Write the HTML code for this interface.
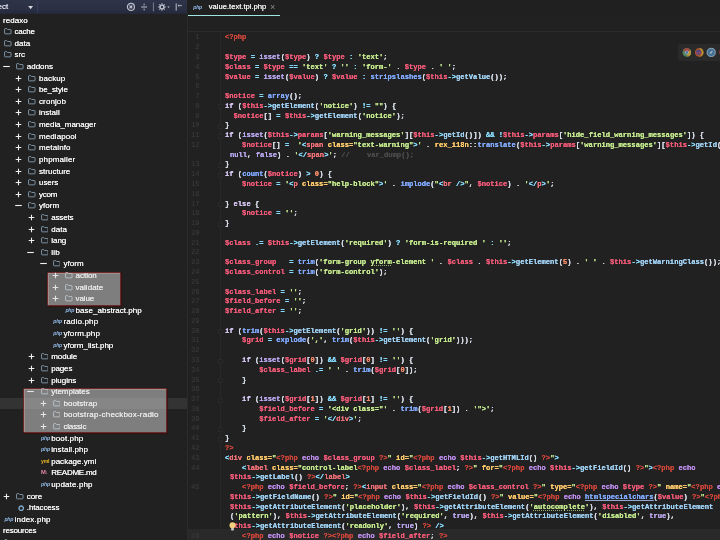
<!DOCTYPE html>
<html lang="en"><head><meta charset="utf-8"><title>value.text.tpl.php</title>
<style>
*{margin:0;padding:0;box-sizing:border-box}
html,body{width:720px;height:540px;overflow:hidden;background:#212121}
body{position:relative;font-family:"Liberation Sans", sans-serif;color:#e6e6e6;-webkit-font-smoothing:antialiased}
#side{position:absolute;left:0;top:0;width:187px;height:540px;background:#212121;overflow:hidden}
.tr,.cl,.ln,#tab,#sbar{will-change:transform}
#sbar{position:absolute;left:0;top:0;width:187.2px;height:13.6px;background:linear-gradient(#2e3449,#2a2f43 70%,#24283a)}
#sbar .t{position:absolute;left:-16.8px;top:0.2px;line-height:14px;font-size:8px;color:#d5d9e4;text-shadow:0 0 0 #d5d9e4}
#tabs{position:absolute;left:187px;top:0;width:533px;height:15.8px;background:#202020}
#tab{position:absolute;left:0;top:0;width:93px;height:15.8px}
#tab .u{position:absolute;left:0.4px;top:14.7px;width:92.4px;height:1.3px;background:#9fe6e2}
#tab .n{position:absolute;left:21.8px;top:0.4px;text-shadow:0 0 0 #f0f0f0;line-height:14px;font-size:7.6px;color:#f0f0f0;white-space:nowrap}
#tab .x{position:absolute;left:83px;top:0.9px;line-height:13.5px;font-size:9px;color:#8a8a8a}
#crumb{position:absolute;left:187px;top:15.8px;width:533px;height:16px;background:#212121;border-bottom:1px solid #2c2c2c}
#ed{position:absolute;left:187px;top:31.8px;width:533px;height:508.2px;background:#212121}
#vline{position:absolute;left:187px;top:14px;width:1px;height:526px;background:#2b2b2b}
#gline{position:absolute;left:219.8px;top:31.6px;width:1px;height:509px;background:#282828}
.ln{position:absolute;left:187px;width:12.6px;text-align:right;font-family:"Liberation Mono", monospace;font-size:7.14px;line-height:9.775px;height:9.775px;color:#3d3d3d}
.cl{position:absolute;white-space:pre;font-family:"Liberation Mono", monospace;font-size:7.14px;line-height:9.775px;height:9.775px;color:#d8dee9;font-weight:bold;text-shadow:0 0 0 currentColor}
.u1{color:#b9d0f5;text-decoration:underline;text-decoration-color:#93a8cc;text-decoration-thickness:0.6px;text-underline-offset:1.1px}
.u2{text-decoration:underline dotted;text-decoration-color:#8fae6a;text-decoration-thickness:0.8px;text-underline-offset:1.1px}
.m{color:#9fd0f2}.k1{color:#d4c6f1}.k3{color:#bb8cea}.fd{position:absolute;left:217.6px;width:5px;height:5px;border:1px solid #2a2a2a;background:#212121;border-radius:1px}
.v{color:#f25a78}.k{color:#b9a7ee}.f{color:#82aaff}.s{color:#c3e88d}.n{color:#f78c6c}
.o{color:#89ddff}.p{color:#d8dee9}.t{color:#f07178}.a{color:#ffcb6b}.h{color:#cc453a}.c{color:#4a4a4a}
.tr{position:absolute;left:0;width:187px;height:11.61px;line-height:11.61px;font-size:8.0px;white-space:nowrap}
.tr .nm{position:absolute;top:0;color:#f4f4f4;text-shadow:0 0 0 #f4f4f4}
.tr .tg{position:absolute;top:1.6px}
.tr .icw{position:absolute;top:0;height:11.61px;display:flex;align-items:center}
.ic.tx{font-size:5.2px;font-style:italic;font-weight:bold;letter-spacing:-0.2px;line-height:1;position:relative;top:-0.3px}
.ic.php{color:#8fb8e6}.ic.yml{color:#e6b422;font-style:normal}.ic.md{color:#e48aa4;font-style:normal;font-size:5.8px;letter-spacing:-0.6px}
.ib .ic path{stroke:#b9c1c9}
.ib .nm{color:#e6e6e6;text-shadow:0 0 0 #e6e6e6}
.ib .tg path{stroke:#e4e4e4}
#sel{position:absolute;left:0;top:397.6px;width:187px;height:11.6px;background:#333333}
.hb{position:absolute;background:rgba(200,200,200,0.56);border:1px solid #6a2a2c;border-radius:1.5px;box-shadow:inset 0.5px 0.5px 0 0.3px rgba(225,170,170,0.5),0.4px 0.6px 0.8px rgba(70,10,10,0.7)}
</style></head>
<body>
<div id="side">
<div id="sel"></div>
<div class="hb" style="left:46.6px;top:271.7px;width:74.6px;height:34.6px"></div>
<div class="hb" style="left:23.2px;top:388.1px;width:144px;height:45.4px"></div>
<div class="tr" style="top:14.60px"><span class="nm" id="n0" style="left:3.00px;letter-spacing:0.039px">redaxo</span></div>
<div class="tr" style="top:26.21px"><span class="icw" style="left:4.00px"><svg class="ic" viewBox="0 0 16 14" width="7.6" height="6.5" preserveAspectRatio="none" style="margin-top:-0.4px"><path d="M1.2 2.6 Q1.2 1.4 2.4 1.4 H6 L7.6 3.2 H13.6 Q14.8 3.2 14.8 4.4 V11.4 Q14.8 12.6 13.6 12.6 H2.4 Q1.2 12.6 1.2 11.4 Z" fill="none" stroke="#8097aa" stroke-width="2" stroke-linejoin="round"/></svg></span><span class="nm" id="n1" style="left:14.60px;letter-spacing:-0.250px">cache</span></div>
<div class="tr" style="top:37.82px"><span class="icw" style="left:4.00px"><svg class="ic" viewBox="0 0 16 14" width="7.6" height="6.5" preserveAspectRatio="none" style="margin-top:-0.4px"><path d="M1.2 2.6 Q1.2 1.4 2.4 1.4 H6 L7.6 3.2 H13.6 Q14.8 3.2 14.8 4.4 V11.4 Q14.8 12.6 13.6 12.6 H2.4 Q1.2 12.6 1.2 11.4 Z" fill="none" stroke="#8097aa" stroke-width="2" stroke-linejoin="round"/></svg></span><span class="nm" id="n2" style="left:14.60px;letter-spacing:0.032px">data</span></div>
<div class="tr" style="top:49.43px"><span class="icw" style="left:4.00px"><svg class="ic" viewBox="0 0 16 14" width="7.6" height="6.5" preserveAspectRatio="none" style="margin-top:-0.4px"><path d="M1.2 2.6 Q1.2 1.4 2.4 1.4 H6 L7.6 3.2 H13.6 Q14.8 3.2 14.8 4.4 V11.4 Q14.8 12.6 13.6 12.6 H2.4 Q1.2 12.6 1.2 11.4 Z" fill="none" stroke="#8097aa" stroke-width="2" stroke-linejoin="round"/></svg></span><span class="nm" id="n3" style="left:14.60px;letter-spacing:-0.089px">src</span></div>
<div class="tr" style="top:61.04px"><svg class="tg" style="left:2.90px" width="7" height="7" viewBox="0 0 7 7"><path d="M0.2 3.5H6.8" stroke="#f0f0f0" stroke-width="1.1" fill="none"/></svg><span class="icw" style="left:16.20px"><svg class="ic" viewBox="0 0 16 14" width="7.6" height="6.5" preserveAspectRatio="none" style="margin-top:-0.4px"><path d="M1.2 2.6 Q1.2 1.4 2.4 1.4 H6 L7.6 3.2 H13.6 Q14.8 3.2 14.8 4.4 V11.4 Q14.8 12.6 13.6 12.6 H2.4 Q1.2 12.6 1.2 11.4 Z" fill="none" stroke="#8097aa" stroke-width="2" stroke-linejoin="round"/></svg></span><span class="nm" id="n4" style="left:26.80px;letter-spacing:-0.008px">addons</span></div>
<div class="tr" style="top:72.65px"><svg class="tg" style="left:15.40px" width="7" height="7" viewBox="0 0 7 7"><path d="M0.7 3.5H6.3M3.5 0.7V6.3" stroke="#f0f0f0" stroke-width="1.1" fill="none"/></svg><span class="icw" style="left:28.40px"><svg class="ic" viewBox="0 0 16 14" width="7.6" height="6.5" preserveAspectRatio="none" style="margin-top:-0.4px"><path d="M1.2 2.6 Q1.2 1.4 2.4 1.4 H6 L7.6 3.2 H13.6 Q14.8 3.2 14.8 4.4 V11.4 Q14.8 12.6 13.6 12.6 H2.4 Q1.2 12.6 1.2 11.4 Z" fill="none" stroke="#8097aa" stroke-width="2" stroke-linejoin="round"/></svg></span><span class="nm" id="n5" style="left:39.00px;letter-spacing:0.084px">backup</span></div>
<div class="tr" style="top:84.26px"><svg class="tg" style="left:15.40px" width="7" height="7" viewBox="0 0 7 7"><path d="M0.7 3.5H6.3M3.5 0.7V6.3" stroke="#f0f0f0" stroke-width="1.1" fill="none"/></svg><span class="icw" style="left:28.40px"><svg class="ic" viewBox="0 0 16 14" width="7.6" height="6.5" preserveAspectRatio="none" style="margin-top:-0.4px"><path d="M1.2 2.6 Q1.2 1.4 2.4 1.4 H6 L7.6 3.2 H13.6 Q14.8 3.2 14.8 4.4 V11.4 Q14.8 12.6 13.6 12.6 H2.4 Q1.2 12.6 1.2 11.4 Z" fill="none" stroke="#8097aa" stroke-width="2" stroke-linejoin="round"/></svg></span><span class="nm" id="n6" style="left:39.00px;letter-spacing:-0.137px">be_style</span></div>
<div class="tr" style="top:95.87px"><svg class="tg" style="left:15.40px" width="7" height="7" viewBox="0 0 7 7"><path d="M0.7 3.5H6.3M3.5 0.7V6.3" stroke="#f0f0f0" stroke-width="1.1" fill="none"/></svg><span class="icw" style="left:28.40px"><svg class="ic" viewBox="0 0 16 14" width="7.6" height="6.5" preserveAspectRatio="none" style="margin-top:-0.4px"><path d="M1.2 2.6 Q1.2 1.4 2.4 1.4 H6 L7.6 3.2 H13.6 Q14.8 3.2 14.8 4.4 V11.4 Q14.8 12.6 13.6 12.6 H2.4 Q1.2 12.6 1.2 11.4 Z" fill="none" stroke="#8097aa" stroke-width="2" stroke-linejoin="round"/></svg></span><span class="nm" id="n7" style="left:39.00px;letter-spacing:0.107px">cronjob</span></div>
<div class="tr" style="top:107.48px"><svg class="tg" style="left:15.40px" width="7" height="7" viewBox="0 0 7 7"><path d="M0.7 3.5H6.3M3.5 0.7V6.3" stroke="#f0f0f0" stroke-width="1.1" fill="none"/></svg><span class="icw" style="left:28.40px"><svg class="ic" viewBox="0 0 16 14" width="7.6" height="6.5" preserveAspectRatio="none" style="margin-top:-0.4px"><path d="M1.2 2.6 Q1.2 1.4 2.4 1.4 H6 L7.6 3.2 H13.6 Q14.8 3.2 14.8 4.4 V11.4 Q14.8 12.6 13.6 12.6 H2.4 Q1.2 12.6 1.2 11.4 Z" fill="none" stroke="#8097aa" stroke-width="2" stroke-linejoin="round"/></svg></span><span class="nm" id="n8" style="left:39.00px;letter-spacing:0.035px">install</span></div>
<div class="tr" style="top:119.09px"><svg class="tg" style="left:15.40px" width="7" height="7" viewBox="0 0 7 7"><path d="M0.7 3.5H6.3M3.5 0.7V6.3" stroke="#f0f0f0" stroke-width="1.1" fill="none"/></svg><span class="icw" style="left:28.40px"><svg class="ic" viewBox="0 0 16 14" width="7.6" height="6.5" preserveAspectRatio="none" style="margin-top:-0.4px"><path d="M1.2 2.6 Q1.2 1.4 2.4 1.4 H6 L7.6 3.2 H13.6 Q14.8 3.2 14.8 4.4 V11.4 Q14.8 12.6 13.6 12.6 H2.4 Q1.2 12.6 1.2 11.4 Z" fill="none" stroke="#8097aa" stroke-width="2" stroke-linejoin="round"/></svg></span><span class="nm" id="n9" style="left:39.00px;letter-spacing:-0.062px">media_manager</span></div>
<div class="tr" style="top:130.70px"><svg class="tg" style="left:15.40px" width="7" height="7" viewBox="0 0 7 7"><path d="M0.7 3.5H6.3M3.5 0.7V6.3" stroke="#f0f0f0" stroke-width="1.1" fill="none"/></svg><span class="icw" style="left:28.40px"><svg class="ic" viewBox="0 0 16 14" width="7.6" height="6.5" preserveAspectRatio="none" style="margin-top:-0.4px"><path d="M1.2 2.6 Q1.2 1.4 2.4 1.4 H6 L7.6 3.2 H13.6 Q14.8 3.2 14.8 4.4 V11.4 Q14.8 12.6 13.6 12.6 H2.4 Q1.2 12.6 1.2 11.4 Z" fill="none" stroke="#8097aa" stroke-width="2" stroke-linejoin="round"/></svg></span><span class="nm" id="n10" style="left:39.00px;letter-spacing:0.086px">mediapool</span></div>
<div class="tr" style="top:142.31px"><svg class="tg" style="left:15.40px" width="7" height="7" viewBox="0 0 7 7"><path d="M0.7 3.5H6.3M3.5 0.7V6.3" stroke="#f0f0f0" stroke-width="1.1" fill="none"/></svg><span class="icw" style="left:28.40px"><svg class="ic" viewBox="0 0 16 14" width="7.6" height="6.5" preserveAspectRatio="none" style="margin-top:-0.4px"><path d="M1.2 2.6 Q1.2 1.4 2.4 1.4 H6 L7.6 3.2 H13.6 Q14.8 3.2 14.8 4.4 V11.4 Q14.8 12.6 13.6 12.6 H2.4 Q1.2 12.6 1.2 11.4 Z" fill="none" stroke="#8097aa" stroke-width="2" stroke-linejoin="round"/></svg></span><span class="nm" id="n11" style="left:39.00px;letter-spacing:0.127px">metainfo</span></div>
<div class="tr" style="top:153.92px"><svg class="tg" style="left:15.40px" width="7" height="7" viewBox="0 0 7 7"><path d="M0.7 3.5H6.3M3.5 0.7V6.3" stroke="#f0f0f0" stroke-width="1.1" fill="none"/></svg><span class="icw" style="left:28.40px"><svg class="ic" viewBox="0 0 16 14" width="7.6" height="6.5" preserveAspectRatio="none" style="margin-top:-0.4px"><path d="M1.2 2.6 Q1.2 1.4 2.4 1.4 H6 L7.6 3.2 H13.6 Q14.8 3.2 14.8 4.4 V11.4 Q14.8 12.6 13.6 12.6 H2.4 Q1.2 12.6 1.2 11.4 Z" fill="none" stroke="#8097aa" stroke-width="2" stroke-linejoin="round"/></svg></span><span class="nm" id="n12" style="left:39.00px;letter-spacing:0.129px">phpmailer</span></div>
<div class="tr" style="top:165.53px"><svg class="tg" style="left:15.40px" width="7" height="7" viewBox="0 0 7 7"><path d="M0.7 3.5H6.3M3.5 0.7V6.3" stroke="#f0f0f0" stroke-width="1.1" fill="none"/></svg><span class="icw" style="left:28.40px"><svg class="ic" viewBox="0 0 16 14" width="7.6" height="6.5" preserveAspectRatio="none" style="margin-top:-0.4px"><path d="M1.2 2.6 Q1.2 1.4 2.4 1.4 H6 L7.6 3.2 H13.6 Q14.8 3.2 14.8 4.4 V11.4 Q14.8 12.6 13.6 12.6 H2.4 Q1.2 12.6 1.2 11.4 Z" fill="none" stroke="#8097aa" stroke-width="2" stroke-linejoin="round"/></svg></span><span class="nm" id="n13" style="left:39.00px;letter-spacing:0.019px">structure</span></div>
<div class="tr" style="top:177.14px"><svg class="tg" style="left:15.40px" width="7" height="7" viewBox="0 0 7 7"><path d="M0.7 3.5H6.3M3.5 0.7V6.3" stroke="#f0f0f0" stroke-width="1.1" fill="none"/></svg><span class="icw" style="left:28.40px"><svg class="ic" viewBox="0 0 16 14" width="7.6" height="6.5" preserveAspectRatio="none" style="margin-top:-0.4px"><path d="M1.2 2.6 Q1.2 1.4 2.4 1.4 H6 L7.6 3.2 H13.6 Q14.8 3.2 14.8 4.4 V11.4 Q14.8 12.6 13.6 12.6 H2.4 Q1.2 12.6 1.2 11.4 Z" fill="none" stroke="#8097aa" stroke-width="2" stroke-linejoin="round"/></svg></span><span class="nm" id="n14" style="left:39.00px;letter-spacing:-0.053px">users</span></div>
<div class="tr" style="top:188.75px"><svg class="tg" style="left:15.40px" width="7" height="7" viewBox="0 0 7 7"><path d="M0.7 3.5H6.3M3.5 0.7V6.3" stroke="#f0f0f0" stroke-width="1.1" fill="none"/></svg><span class="icw" style="left:28.40px"><svg class="ic" viewBox="0 0 16 14" width="7.6" height="6.5" preserveAspectRatio="none" style="margin-top:-0.4px"><path d="M1.2 2.6 Q1.2 1.4 2.4 1.4 H6 L7.6 3.2 H13.6 Q14.8 3.2 14.8 4.4 V11.4 Q14.8 12.6 13.6 12.6 H2.4 Q1.2 12.6 1.2 11.4 Z" fill="none" stroke="#8097aa" stroke-width="2" stroke-linejoin="round"/></svg></span><span class="nm" id="n15" style="left:39.00px;letter-spacing:-0.206px">ycom</span></div>
<div class="tr" style="top:200.36px"><svg class="tg" style="left:15.10px" width="7" height="7" viewBox="0 0 7 7"><path d="M0.2 3.5H6.8" stroke="#f0f0f0" stroke-width="1.1" fill="none"/></svg><span class="icw" style="left:28.40px"><svg class="ic" viewBox="0 0 16 14" width="7.6" height="6.5" preserveAspectRatio="none" style="margin-top:-0.4px"><path d="M1.2 2.6 Q1.2 1.4 2.4 1.4 H6 L7.6 3.2 H13.6 Q14.8 3.2 14.8 4.4 V11.4 Q14.8 12.6 13.6 12.6 H2.4 Q1.2 12.6 1.2 11.4 Z" fill="none" stroke="#8097aa" stroke-width="2" stroke-linejoin="round"/></svg></span><span class="nm" id="n16" style="left:39.00px;letter-spacing:0.060px">yform</span></div>
<div class="tr" style="top:211.97px"><svg class="tg" style="left:27.60px" width="7" height="7" viewBox="0 0 7 7"><path d="M0.7 3.5H6.3M3.5 0.7V6.3" stroke="#f0f0f0" stroke-width="1.1" fill="none"/></svg><span class="icw" style="left:40.60px"><svg class="ic" viewBox="0 0 16 14" width="7.6" height="6.5" preserveAspectRatio="none" style="margin-top:-0.4px"><path d="M1.2 2.6 Q1.2 1.4 2.4 1.4 H6 L7.6 3.2 H13.6 Q14.8 3.2 14.8 4.4 V11.4 Q14.8 12.6 13.6 12.6 H2.4 Q1.2 12.6 1.2 11.4 Z" fill="none" stroke="#8097aa" stroke-width="2" stroke-linejoin="round"/></svg></span><span class="nm" id="n17" style="left:51.20px;letter-spacing:-0.169px">assets</span></div>
<div class="tr" style="top:223.58px"><svg class="tg" style="left:27.60px" width="7" height="7" viewBox="0 0 7 7"><path d="M0.7 3.5H6.3M3.5 0.7V6.3" stroke="#f0f0f0" stroke-width="1.1" fill="none"/></svg><span class="icw" style="left:40.60px"><svg class="ic" viewBox="0 0 16 14" width="7.6" height="6.5" preserveAspectRatio="none" style="margin-top:-0.4px"><path d="M1.2 2.6 Q1.2 1.4 2.4 1.4 H6 L7.6 3.2 H13.6 Q14.8 3.2 14.8 4.4 V11.4 Q14.8 12.6 13.6 12.6 H2.4 Q1.2 12.6 1.2 11.4 Z" fill="none" stroke="#8097aa" stroke-width="2" stroke-linejoin="round"/></svg></span><span class="nm" id="n18" style="left:51.20px;letter-spacing:0.059px">data</span></div>
<div class="tr" style="top:235.19px"><svg class="tg" style="left:27.60px" width="7" height="7" viewBox="0 0 7 7"><path d="M0.7 3.5H6.3M3.5 0.7V6.3" stroke="#f0f0f0" stroke-width="1.1" fill="none"/></svg><span class="icw" style="left:40.60px"><svg class="ic" viewBox="0 0 16 14" width="7.6" height="6.5" preserveAspectRatio="none" style="margin-top:-0.4px"><path d="M1.2 2.6 Q1.2 1.4 2.4 1.4 H6 L7.6 3.2 H13.6 Q14.8 3.2 14.8 4.4 V11.4 Q14.8 12.6 13.6 12.6 H2.4 Q1.2 12.6 1.2 11.4 Z" fill="none" stroke="#8097aa" stroke-width="2" stroke-linejoin="round"/></svg></span><span class="nm" id="n19" style="left:51.20px;letter-spacing:-0.003px">lang</span></div>
<div class="tr" style="top:246.80px"><svg class="tg" style="left:27.30px" width="7" height="7" viewBox="0 0 7 7"><path d="M0.2 3.5H6.8" stroke="#f0f0f0" stroke-width="1.1" fill="none"/></svg><span class="icw" style="left:40.60px"><svg class="ic" viewBox="0 0 16 14" width="7.6" height="6.5" preserveAspectRatio="none" style="margin-top:-0.4px"><path d="M1.2 2.6 Q1.2 1.4 2.4 1.4 H6 L7.6 3.2 H13.6 Q14.8 3.2 14.8 4.4 V11.4 Q14.8 12.6 13.6 12.6 H2.4 Q1.2 12.6 1.2 11.4 Z" fill="none" stroke="#8097aa" stroke-width="2" stroke-linejoin="round"/></svg></span><span class="nm" id="n20" style="left:51.20px;letter-spacing:0.266px">lib</span></div>
<div class="tr" style="top:258.41px"><svg class="tg" style="left:39.50px" width="7" height="7" viewBox="0 0 7 7"><path d="M0.2 3.5H6.8" stroke="#f0f0f0" stroke-width="1.1" fill="none"/></svg><span class="icw" style="left:52.80px"><svg class="ic" viewBox="0 0 16 14" width="7.6" height="6.5" preserveAspectRatio="none" style="margin-top:-0.4px"><path d="M1.2 2.6 Q1.2 1.4 2.4 1.4 H6 L7.6 3.2 H13.6 Q14.8 3.2 14.8 4.4 V11.4 Q14.8 12.6 13.6 12.6 H2.4 Q1.2 12.6 1.2 11.4 Z" fill="none" stroke="#8097aa" stroke-width="2" stroke-linejoin="round"/></svg></span><span class="nm" id="n21" style="left:63.40px;letter-spacing:0.062px">yform</span></div>
<div class="tr ib" style="top:270.02px"><svg class="tg" style="left:52.00px" width="7" height="7" viewBox="0 0 7 7"><path d="M0.7 3.5H6.3M3.5 0.7V6.3" stroke="#f0f0f0" stroke-width="1.1" fill="none"/></svg><span class="icw" style="left:65.00px"><svg class="ic" viewBox="0 0 16 14" width="7.6" height="6.5" preserveAspectRatio="none" style="margin-top:-0.4px"><path d="M1.2 2.6 Q1.2 1.4 2.4 1.4 H6 L7.6 3.2 H13.6 Q14.8 3.2 14.8 4.4 V11.4 Q14.8 12.6 13.6 12.6 H2.4 Q1.2 12.6 1.2 11.4 Z" fill="none" stroke="#8097aa" stroke-width="2" stroke-linejoin="round"/></svg></span><span class="nm" id="n22" style="left:75.60px;letter-spacing:-0.042px">action</span></div>
<div class="tr ib" style="top:281.63px"><svg class="tg" style="left:52.00px" width="7" height="7" viewBox="0 0 7 7"><path d="M0.7 3.5H6.3M3.5 0.7V6.3" stroke="#f0f0f0" stroke-width="1.1" fill="none"/></svg><span class="icw" style="left:65.00px"><svg class="ic" viewBox="0 0 16 14" width="7.6" height="6.5" preserveAspectRatio="none" style="margin-top:-0.4px"><path d="M1.2 2.6 Q1.2 1.4 2.4 1.4 H6 L7.6 3.2 H13.6 Q14.8 3.2 14.8 4.4 V11.4 Q14.8 12.6 13.6 12.6 H2.4 Q1.2 12.6 1.2 11.4 Z" fill="none" stroke="#8097aa" stroke-width="2" stroke-linejoin="round"/></svg></span><span class="nm" id="n23" style="left:75.60px;letter-spacing:0.016px">validate</span></div>
<div class="tr ib" style="top:293.24px"><svg class="tg" style="left:52.00px" width="7" height="7" viewBox="0 0 7 7"><path d="M0.7 3.5H6.3M3.5 0.7V6.3" stroke="#f0f0f0" stroke-width="1.1" fill="none"/></svg><span class="icw" style="left:65.00px"><svg class="ic" viewBox="0 0 16 14" width="7.6" height="6.5" preserveAspectRatio="none" style="margin-top:-0.4px"><path d="M1.2 2.6 Q1.2 1.4 2.4 1.4 H6 L7.6 3.2 H13.6 Q14.8 3.2 14.8 4.4 V11.4 Q14.8 12.6 13.6 12.6 H2.4 Q1.2 12.6 1.2 11.4 Z" fill="none" stroke="#8097aa" stroke-width="2" stroke-linejoin="round"/></svg></span><span class="nm" id="n24" style="left:75.60px;letter-spacing:-0.144px">value</span></div>
<div class="tr" style="top:304.85px"><span class="icw" style="left:65.40px"><span class="ic tx php">php</span></span><span class="nm" id="n25" style="left:75.60px;letter-spacing:0.016px">base_abstract.php</span></div>
<div class="tr" style="top:316.46px"><span class="icw" style="left:53.20px"><span class="ic tx php">php</span></span><span class="nm" id="n26" style="left:63.40px;letter-spacing:0.172px">radio.php</span></div>
<div class="tr" style="top:328.07px"><span class="icw" style="left:53.20px"><span class="ic tx php">php</span></span><span class="nm" id="n27" style="left:63.40px;letter-spacing:0.115px">yform.php</span></div>
<div class="tr" style="top:339.68px"><span class="icw" style="left:53.20px"><span class="ic tx php">php</span></span><span class="nm" id="n28" style="left:63.40px;letter-spacing:0.008px">yform_list.php</span></div>
<div class="tr" style="top:351.29px"><svg class="tg" style="left:27.60px" width="7" height="7" viewBox="0 0 7 7"><path d="M0.7 3.5H6.3M3.5 0.7V6.3" stroke="#f0f0f0" stroke-width="1.1" fill="none"/></svg><span class="icw" style="left:40.60px"><svg class="ic" viewBox="0 0 16 14" width="7.6" height="6.5" preserveAspectRatio="none" style="margin-top:-0.4px"><path d="M1.2 2.6 Q1.2 1.4 2.4 1.4 H6 L7.6 3.2 H13.6 Q14.8 3.2 14.8 4.4 V11.4 Q14.8 12.6 13.6 12.6 H2.4 Q1.2 12.6 1.2 11.4 Z" fill="none" stroke="#8097aa" stroke-width="2" stroke-linejoin="round"/></svg></span><span class="nm" id="n29" style="left:51.20px;letter-spacing:-0.023px">module</span></div>
<div class="tr" style="top:362.90px"><svg class="tg" style="left:27.60px" width="7" height="7" viewBox="0 0 7 7"><path d="M0.7 3.5H6.3M3.5 0.7V6.3" stroke="#f0f0f0" stroke-width="1.1" fill="none"/></svg><span class="icw" style="left:40.60px"><svg class="ic" viewBox="0 0 16 14" width="7.6" height="6.5" preserveAspectRatio="none" style="margin-top:-0.4px"><path d="M1.2 2.6 Q1.2 1.4 2.4 1.4 H6 L7.6 3.2 H13.6 Q14.8 3.2 14.8 4.4 V11.4 Q14.8 12.6 13.6 12.6 H2.4 Q1.2 12.6 1.2 11.4 Z" fill="none" stroke="#8097aa" stroke-width="2" stroke-linejoin="round"/></svg></span><span class="nm" id="n30" style="left:51.20px;letter-spacing:-0.137px">pages</span></div>
<div class="tr" style="top:374.51px"><svg class="tg" style="left:27.60px" width="7" height="7" viewBox="0 0 7 7"><path d="M0.7 3.5H6.3M3.5 0.7V6.3" stroke="#f0f0f0" stroke-width="1.1" fill="none"/></svg><span class="icw" style="left:40.60px"><svg class="ic" viewBox="0 0 16 14" width="7.6" height="6.5" preserveAspectRatio="none" style="margin-top:-0.4px"><path d="M1.2 2.6 Q1.2 1.4 2.4 1.4 H6 L7.6 3.2 H13.6 Q14.8 3.2 14.8 4.4 V11.4 Q14.8 12.6 13.6 12.6 H2.4 Q1.2 12.6 1.2 11.4 Z" fill="none" stroke="#8097aa" stroke-width="2" stroke-linejoin="round"/></svg></span><span class="nm" id="n31" style="left:51.20px;letter-spacing:-0.035px">plugins</span></div>
<div class="tr ib" style="top:386.12px"><svg class="tg" style="left:27.30px" width="7" height="7" viewBox="0 0 7 7"><path d="M0.2 3.5H6.8" stroke="#f0f0f0" stroke-width="1.1" fill="none"/></svg><span class="icw" style="left:40.60px"><svg class="ic" viewBox="0 0 16 14" width="7.6" height="6.5" preserveAspectRatio="none" style="margin-top:-0.4px"><path d="M1.2 2.6 Q1.2 1.4 2.4 1.4 H6 L7.6 3.2 H13.6 Q14.8 3.2 14.8 4.4 V11.4 Q14.8 12.6 13.6 12.6 H2.4 Q1.2 12.6 1.2 11.4 Z" fill="none" stroke="#8097aa" stroke-width="2" stroke-linejoin="round"/></svg></span><span class="nm" id="n32" style="left:51.20px;letter-spacing:-0.017px">ytemplates</span></div>
<div class="tr ib" style="top:397.73px"><svg class="tg" style="left:39.80px" width="7" height="7" viewBox="0 0 7 7"><path d="M0.7 3.5H6.3M3.5 0.7V6.3" stroke="#f0f0f0" stroke-width="1.1" fill="none"/></svg><span class="icw" style="left:52.80px"><svg class="ic" viewBox="0 0 16 14" width="7.6" height="6.5" preserveAspectRatio="none" style="margin-top:-0.4px"><path d="M1.2 2.6 Q1.2 1.4 2.4 1.4 H6 L7.6 3.2 H13.6 Q14.8 3.2 14.8 4.4 V11.4 Q14.8 12.6 13.6 12.6 H2.4 Q1.2 12.6 1.2 11.4 Z" fill="none" stroke="#8097aa" stroke-width="2" stroke-linejoin="round"/></svg></span><span class="nm" id="n33" style="left:63.40px;letter-spacing:0.061px">bootstrap</span></div>
<div class="tr ib" style="top:409.34px"><svg class="tg" style="left:39.80px" width="7" height="7" viewBox="0 0 7 7"><path d="M0.7 3.5H6.3M3.5 0.7V6.3" stroke="#f0f0f0" stroke-width="1.1" fill="none"/></svg><span class="icw" style="left:52.80px"><svg class="ic" viewBox="0 0 16 14" width="7.6" height="6.5" preserveAspectRatio="none" style="margin-top:-0.4px"><path d="M1.2 2.6 Q1.2 1.4 2.4 1.4 H6 L7.6 3.2 H13.6 Q14.8 3.2 14.8 4.4 V11.4 Q14.8 12.6 13.6 12.6 H2.4 Q1.2 12.6 1.2 11.4 Z" fill="none" stroke="#8097aa" stroke-width="2" stroke-linejoin="round"/></svg></span><span class="nm" id="n34" style="left:63.40px;letter-spacing:0.210px">bootstrap-checkbox-radio</span></div>
<div class="tr ib" style="top:420.95px"><svg class="tg" style="left:39.80px" width="7" height="7" viewBox="0 0 7 7"><path d="M0.7 3.5H6.3M3.5 0.7V6.3" stroke="#f0f0f0" stroke-width="1.1" fill="none"/></svg><span class="icw" style="left:52.80px"><svg class="ic" viewBox="0 0 16 14" width="7.6" height="6.5" preserveAspectRatio="none" style="margin-top:-0.4px"><path d="M1.2 2.6 Q1.2 1.4 2.4 1.4 H6 L7.6 3.2 H13.6 Q14.8 3.2 14.8 4.4 V11.4 Q14.8 12.6 13.6 12.6 H2.4 Q1.2 12.6 1.2 11.4 Z" fill="none" stroke="#8097aa" stroke-width="2" stroke-linejoin="round"/></svg></span><span class="nm" id="n35" style="left:63.40px;letter-spacing:-0.158px">classic</span></div>
<div class="tr" style="top:432.56px"><span class="icw" style="left:41.00px"><span class="ic tx php">php</span></span><span class="nm" id="n36" style="left:51.20px;letter-spacing:0.121px">boot.php</span></div>
<div class="tr" style="top:444.17px"><span class="icw" style="left:41.00px"><span class="ic tx php">php</span></span><span class="nm" id="n37" style="left:51.20px;letter-spacing:0.071px">install.php</span></div>
<div class="tr" style="top:455.78px"><span class="icw" style="left:41.00px"><span class="ic tx yml">yml</span></span><span class="nm" id="n38" style="left:51.20px;letter-spacing:0.017px">package.yml</span></div>
<div class="tr" style="top:467.39px"><span class="icw" style="left:41.00px"><span class="ic tx md">M&#8595;</span></span><span class="nm" id="n39" style="left:51.20px;letter-spacing:-0.250px">README.md</span></div>
<div class="tr" style="top:479.00px"><span class="icw" style="left:41.00px"><span class="ic tx php">php</span></span><span class="nm" id="n40" style="left:51.20px;letter-spacing:0.147px">update.php</span></div>
<div class="tr" style="top:490.61px"><svg class="tg" style="left:3.20px" width="7" height="7" viewBox="0 0 7 7"><path d="M0.7 3.5H6.3M3.5 0.7V6.3" stroke="#f0f0f0" stroke-width="1.1" fill="none"/></svg><span class="icw" style="left:16.20px"><svg class="ic" viewBox="0 0 16 14" width="7.6" height="6.5" preserveAspectRatio="none" style="margin-top:-0.4px"><path d="M1.2 2.6 Q1.2 1.4 2.4 1.4 H6 L7.6 3.2 H13.6 Q14.8 3.2 14.8 4.4 V11.4 Q14.8 12.6 13.6 12.6 H2.4 Q1.2 12.6 1.2 11.4 Z" fill="none" stroke="#8097aa" stroke-width="2" stroke-linejoin="round"/></svg></span><span class="nm" id="n41" style="left:26.80px;letter-spacing:-0.090px">core</span></div>
<div class="tr" style="top:502.22px"><span class="icw" style="left:16.20px"><svg class="ic" viewBox="0 0 16 16" width="6.4" height="6.4" style="margin-left:1.6px"><circle cx="8" cy="8" r="5.6" fill="none" stroke="#7ea9cc" stroke-width="3.4"/></svg></span><span class="nm" id="n42" style="left:26.80px;letter-spacing:-0.144px">.htaccess</span></div>
<div class="tr" style="top:513.83px"><span class="icw" style="left:4.40px"><span class="ic tx php">php</span></span><span class="nm" id="n43" style="left:14.60px;letter-spacing:0.156px">index.php</span></div>
<div class="tr" style="top:525.44px"><span class="nm" id="n44" style="left:3.00px;letter-spacing:-0.203px">resources</span></div>
<div class="tr" style="top:537.05px"><span class="icw" style="left:4.00px"><svg class="ic" viewBox="0 0 16 14" width="7.6" height="6.5" preserveAspectRatio="none" style="margin-top:-0.4px"><path d="M1.2 2.6 Q1.2 1.4 2.4 1.4 H6 L7.6 3.2 H13.6 Q14.8 3.2 14.8 4.4 V11.4 Q14.8 12.6 13.6 12.6 H2.4 Q1.2 12.6 1.2 11.4 Z" fill="none" stroke="#8097aa" stroke-width="2" stroke-linejoin="round"/></svg></span><span class="nm" id="n45" style="left:14.60px;letter-spacing:0.000px"></span></div>
<div id="sbar"><span class="t">Project</span>
<svg style="position:absolute;left:27.8px;top:5.7px" width="5.2" height="3.2" viewBox="0 0 6 4"><path d="M0 0H6L3 4Z" fill="#d5d9e4"/></svg>
<div style="position:absolute;left:37px;top:1px;width:1px;height:12px;background:#333b5c"></div>
<svg style="position:absolute;left:126px;top:2px" width="58" height="10" viewBox="0 0 58 10" fill="none" stroke="#bcc0cc" stroke-width="1">
<circle cx="4.9" cy="4.9" r="3.5" stroke-width="1.2"/><path d="M3.5 3.5L6.3 6.3M6.3 3.5L3.5 6.3" stroke-width="1.2"/>
<path d="M15.2 5H21M18.1 1.6V3.4M18.1 6.6V8.4" stroke-width="1"/>
<path d="M27.4 0.6V9.4" stroke="#8d93a8" stroke-width="0.8"/>
<circle cx="36" cy="5" r="2" stroke-width="1.6"/><path d="M36 1.2V2.2M36 7.8V8.8M32.2 5H33.2M38.8 5H39.8M33.3 2.3L34 3M38 7L38.7 7.7M33.3 7.7L34 7M38 3L38.7 2.3" stroke-width="1"/>
<path d="M41.4 4.6H43.6L42.5 6Z" fill="#c8ccd8" stroke="none"/>
<path d="M50.2 1.4V8.6" stroke-width="1"/><path d="M52 3.6H56M52 3.6L53.2 2.6M52 3.6L53.2 4.6" stroke-width="0.8"/>
</svg>
</div>
</div>
<div id="tabs"><div id="tab"><span class="ic tx php" style="position:absolute;left:6.2px;top:4.6px">php</span><span class="n">value.text.tpl.php</span><span class="x">&#215;</span><div class="u"></div></div></div>
<div id="crumb"></div>
<div id="ed"></div>
<div id="vline"></div>
<div id="gline"></div>
<div style="position:absolute;left:188px;top:529.3px;width:532px;height:10.7px;background:#292929"></div>
<div class="ln" style="top:33.40px">1</div>
<div class="cl" style="top:33.40px;left:224.70px"><span class="h">&lt;?php</span></div>
<div class="ln" style="top:43.17px">2</div>
<div class="ln" style="top:52.95px">3</div>
<div class="cl" style="top:52.95px;left:224.70px"><span class="v">$type</span> <span class="o">=</span> <span class="k">isset</span><span class="p">(</span><span class="v">$type</span><span class="p">)</span> <span class="o">?</span> <span class="v">$type</span> <span class="o">:</span> <span class="s">'text'</span><span class="p">;</span></div>
<div class="ln" style="top:62.73px">4</div>
<div class="cl" style="top:62.73px;left:224.70px"><span class="v">$class</span> <span class="o">=</span> <span class="v">$type</span> <span class="o">==</span> <span class="s">'text'</span> <span class="o">?</span> <span class="s">''</span> <span class="o">:</span> <span class="s">'form-'</span> <span class="p">.</span> <span class="v">$type</span> <span class="p">.</span> <span class="s">' '</span><span class="p">;</span></div>
<div class="ln" style="top:72.50px">5</div>
<div class="cl" style="top:72.50px;left:224.70px"><span class="v">$value</span> <span class="o">=</span> <span class="k">isset</span><span class="p">(</span><span class="v">$value</span><span class="p">)</span> <span class="o">?</span> <span class="v">$value</span> <span class="o">:</span> <span class="f">stripslashes</span><span class="p">(</span><span class="v">$this</span><span class="o">-&gt;</span><span class="m">getValue</span><span class="p">(</span><span class="p">)</span><span class="p">)</span><span class="p">;</span></div>
<div class="ln" style="top:82.28px">6</div>
<div class="ln" style="top:92.05px">7</div>
<div class="cl" style="top:92.05px;left:224.70px"><span class="v">$notice</span> <span class="o">=</span> <span class="f">array</span><span class="p">(</span><span class="p">)</span><span class="p">;</span></div>
<div class="ln" style="top:101.82px">8</div>
<div class="fd" style="top:104.42px"></div>
<div class="cl" style="top:101.82px;left:224.70px"><span class="k1">if</span> <span class="p">(</span><span class="v">$this</span><span class="o">-&gt;</span><span class="m">getElement</span><span class="p">(</span><span class="s">'notice'</span><span class="p">)</span> <span class="o">!=</span> <span class="s">""</span><span class="p">)</span> <span class="p">{</span></div>
<div class="ln" style="top:111.60px">9</div>
<div class="cl" style="top:111.60px;left:224.70px">  <span class="v">$notice</span><span class="p">[</span><span class="p">]</span> <span class="o">=</span> <span class="v">$this</span><span class="o">-&gt;</span><span class="m">getElement</span><span class="p">(</span><span class="s">'notice'</span><span class="p">)</span><span class="p">;</span></div>
<div class="ln" style="top:121.38px">10</div>
<div class="fd" style="top:123.97px"></div>
<div class="cl" style="top:121.38px;left:224.70px"><span class="p">}</span></div>
<div class="ln" style="top:131.15px">11</div>
<div class="fd" style="top:133.75px"></div>
<div class="cl" style="top:131.15px;left:224.70px"><span class="k1">if</span> <span class="p">(</span><span class="k">isset</span><span class="p">(</span><span class="v">$this</span><span class="o">-&gt;</span><span class="v">params</span><span class="p">[</span><span class="s">'warning_messages'</span><span class="p">]</span><span class="p">[</span><span class="v">$this</span><span class="o">-&gt;</span><span class="m">getId</span><span class="p">(</span><span class="p">)</span><span class="p">]</span><span class="p">)</span> <span class="o">&amp;&amp;</span> <span class="o">!</span><span class="v">$this</span><span class="o">-&gt;</span><span class="v">params</span><span class="p">[</span><span class="s">'hide_field_warning_messages'</span><span class="p">]</span><span class="p">)</span> <span class="p">{</span></div>
<div class="ln" style="top:140.93px">12</div>
<div class="cl" style="top:140.93px;left:224.70px">    <span class="v">$notice</span><span class="p">[</span><span class="p">]</span> <span class="o">=</span>  <span class="s">'</span><span class="o">&lt;</span><span class="t">span</span> <span class="a">class=</span><span class="s">"text-warning"</span><span class="o">&gt;</span><span class="s">'</span> <span class="p">.</span> <span class="a">rex_i18n</span><span class="p">::</span><span class="f">translate</span><span class="p">(</span><span class="v">$this</span><span class="o">-&gt;</span><span class="v">params</span><span class="p">[</span><span class="s">'warning_messages'</span><span class="p">]</span><span class="p">[</span><span class="v">$this</span><span class="o">-&gt;</span><span class="m">getId</span><span class="p">(</span><span class="p">)</span><span class="p">]</span><span class="p">,</span></div>
<div class="cl" style="top:150.70px;left:229.90px"><span class="k">null</span><span class="p">,</span> <span class="k">false</span><span class="p">)</span> <span class="p">.</span> <span class="s">'</span><span class="o">&lt;/</span><span class="t">span</span><span class="o">&gt;</span><span class="s">'</span><span class="p">;</span> <span class="c">//    var_dump();</span></div>
<div class="ln" style="top:160.47px">13</div>
<div class="fd" style="top:163.07px"></div>
<div class="cl" style="top:160.47px;left:224.70px"><span class="p">}</span></div>
<div class="ln" style="top:170.25px">14</div>
<div class="fd" style="top:172.85px"></div>
<div class="cl" style="top:170.25px;left:224.70px"><span class="k1">if</span> <span class="p">(</span><span class="f">count</span><span class="p">(</span><span class="v">$notice</span><span class="p">)</span> <span class="o">&gt;</span> <span class="n">0</span><span class="p">)</span> <span class="p">{</span></div>
<div class="ln" style="top:180.03px">15</div>
<div class="cl" style="top:180.03px;left:224.70px">    <span class="v">$notice</span> <span class="o">=</span> <span class="s">'</span><span class="o">&lt;</span><span class="t">p</span> <span class="a">class=</span><span class="s">"help-block"</span><span class="o">&gt;</span><span class="s">'</span> <span class="p">.</span> <span class="f">implode</span><span class="p">(</span><span class="s">"</span><span class="o">&lt;</span><span class="t">br</span> <span class="o">/&gt;</span><span class="s">"</span><span class="p">,</span> <span class="v">$notice</span><span class="p">)</span> <span class="p">.</span> <span class="s">'</span><span class="o">&lt;/</span><span class="t">p</span><span class="o">&gt;</span><span class="s">'</span><span class="p">;</span></div>
<div class="ln" style="top:189.80px">16</div>
<div class="ln" style="top:199.58px">17</div>
<div class="fd" style="top:202.18px"></div>
<div class="cl" style="top:199.58px;left:224.70px"><span class="p">}</span> <span class="k1">else</span> <span class="p">{</span></div>
<div class="ln" style="top:209.35px">18</div>
<div class="cl" style="top:209.35px;left:224.70px">    <span class="v">$notice</span> <span class="o">=</span> <span class="s">''</span><span class="p">;</span></div>
<div class="ln" style="top:219.12px">19</div>
<div class="fd" style="top:221.72px"></div>
<div class="cl" style="top:219.12px;left:224.70px"><span class="p">}</span></div>
<div class="ln" style="top:228.90px">20</div>
<div class="ln" style="top:238.68px">21</div>
<div class="cl" style="top:238.68px;left:224.70px"><span class="v">$class</span> <span class="o">.=</span> <span class="v">$this</span><span class="o">-&gt;</span><span class="m">getElement</span><span class="p">(</span><span class="s">'required'</span><span class="p">)</span> <span class="o">?</span> <span class="s">'form-is-required '</span> <span class="o">:</span> <span class="s">''</span><span class="p">;</span></div>
<div class="ln" style="top:248.45px">22</div>
<div class="ln" style="top:258.23px">23</div>
<div class="cl" style="top:258.23px;left:224.70px"><span class="v">$class_group</span>   <span class="o">=</span> <span class="f">trim</span><span class="p">(</span><span class="s">'form-group <span class="u2">yform</span>-element '</span> <span class="p">.</span> <span class="v">$class</span> <span class="p">.</span> <span class="v">$this</span><span class="o">-&gt;</span><span class="m">getElement</span><span class="p">(</span><span class="n">5</span><span class="p">)</span> <span class="p">.</span> <span class="s">' '</span> <span class="p">.</span> <span class="v">$this</span><span class="o">-&gt;</span><span class="m">getWarningClass</span><span class="p">(</span><span class="p">)</span><span class="p">)</span><span class="p">;</span></div>
<div class="ln" style="top:268.00px">24</div>
<div class="cl" style="top:268.00px;left:224.70px"><span class="v">$class_control</span> <span class="o">=</span> <span class="f">trim</span><span class="p">(</span><span class="s">'form-control'</span><span class="p">)</span><span class="p">;</span></div>
<div class="ln" style="top:277.77px">25</div>
<div class="ln" style="top:287.55px">26</div>
<div class="cl" style="top:287.55px;left:224.70px"><span class="v">$class_label</span> <span class="o">=</span> <span class="s">''</span><span class="p">;</span></div>
<div class="ln" style="top:297.32px">27</div>
<div class="cl" style="top:297.32px;left:224.70px"><span class="v">$field_before</span> <span class="o">=</span> <span class="s">''</span><span class="p">;</span></div>
<div class="ln" style="top:307.10px">28</div>
<div class="cl" style="top:307.10px;left:224.70px"><span class="v">$field_after</span> <span class="o">=</span> <span class="s">''</span><span class="p">;</span></div>
<div class="ln" style="top:316.88px">29</div>
<div class="ln" style="top:326.65px">30</div>
<div class="fd" style="top:329.25px"></div>
<div class="cl" style="top:326.65px;left:224.70px"><span class="k1">if</span> <span class="p">(</span><span class="f">trim</span><span class="p">(</span><span class="v">$this</span><span class="o">-&gt;</span><span class="m">getElement</span><span class="p">(</span><span class="s">'grid'</span><span class="p">)</span><span class="p">)</span> <span class="o">!=</span> <span class="s">''</span><span class="p">)</span> <span class="p">{</span></div>
<div class="ln" style="top:336.43px">31</div>
<div class="cl" style="top:336.43px;left:224.70px">    <span class="v">$grid</span> <span class="o">=</span> <span class="f">explode</span><span class="p">(</span><span class="s">','</span><span class="p">,</span> <span class="f">trim</span><span class="p">(</span><span class="v">$this</span><span class="o">-&gt;</span><span class="m">getElement</span><span class="p">(</span><span class="s">'grid'</span><span class="p">)</span><span class="p">)</span><span class="p">)</span><span class="p">;</span></div>
<div class="ln" style="top:346.20px">32</div>
<div class="ln" style="top:355.97px">33</div>
<div class="fd" style="top:358.57px"></div>
<div class="cl" style="top:355.97px;left:224.70px">    <span class="k1">if</span> <span class="p">(</span><span class="k">isset</span><span class="p">(</span><span class="v">$grid</span><span class="p">[</span><span class="n">0</span><span class="p">]</span><span class="p">)</span> <span class="o">&amp;&amp;</span> <span class="v">$grid</span><span class="p">[</span><span class="n">0</span><span class="p">]</span> <span class="o">!=</span> <span class="s">''</span><span class="p">)</span> <span class="p">{</span></div>
<div class="ln" style="top:365.75px">34</div>
<div class="cl" style="top:365.75px;left:224.70px">        <span class="v">$class_label</span> <span class="o">.=</span> <span class="s">' '</span> <span class="p">.</span> <span class="f">trim</span><span class="p">(</span><span class="v">$grid</span><span class="p">[</span><span class="n">0</span><span class="p">]</span><span class="p">)</span><span class="p">;</span></div>
<div class="ln" style="top:375.52px">35</div>
<div class="fd" style="top:378.12px"></div>
<div class="cl" style="top:375.52px;left:224.70px">    <span class="p">}</span></div>
<div class="ln" style="top:385.30px">36</div>
<div class="ln" style="top:395.07px">37</div>
<div class="fd" style="top:397.68px"></div>
<div class="cl" style="top:395.07px;left:224.70px">    <span class="k1">if</span> <span class="p">(</span><span class="k">isset</span><span class="p">(</span><span class="v">$grid</span><span class="p">[</span><span class="n">1</span><span class="p">]</span><span class="p">)</span> <span class="o">&amp;&amp;</span> <span class="v">$grid</span><span class="p">[</span><span class="n">1</span><span class="p">]</span> <span class="o">!=</span> <span class="s">''</span><span class="p">)</span> <span class="p">{</span></div>
<div class="ln" style="top:404.85px">38</div>
<div class="cl" style="top:404.85px;left:224.70px">        <span class="v">$field_before</span> <span class="o">=</span> <span class="s">'&lt;div class="'</span> <span class="p">.</span> <span class="f">trim</span><span class="p">(</span><span class="v">$grid</span><span class="p">[</span><span class="n">1</span><span class="p">]</span><span class="p">)</span> <span class="p">.</span> <span class="s">'"&gt;'</span><span class="p">;</span></div>
<div class="ln" style="top:414.62px">39</div>
<div class="cl" style="top:414.62px;left:224.70px">        <span class="v">$field_after</span> <span class="o">=</span> <span class="s">'</span><span class="o">&lt;/</span><span class="t">div</span><span class="o">&gt;</span><span class="s">'</span><span class="p">;</span></div>
<div class="ln" style="top:424.40px">40</div>
<div class="fd" style="top:427.00px"></div>
<div class="cl" style="top:424.40px;left:224.70px">    <span class="p">}</span></div>
<div class="ln" style="top:434.18px">41</div>
<div class="fd" style="top:436.78px"></div>
<div class="cl" style="top:434.18px;left:224.70px"><span class="p">}</span></div>
<div class="ln" style="top:443.95px">42</div>
<div class="cl" style="top:443.95px;left:224.70px"><span class="h">?&gt;</span></div>
<div class="ln" style="top:453.72px">43</div>
<div class="cl" style="top:453.72px;left:224.70px"><span class="o">&lt;</span><span class="t">div</span> <span class="a">class=</span><span class="s">"</span><span class="h">&lt;?php</span> <span class="k3">echo</span> <span class="v">$class_group</span> <span class="h">?&gt;</span><span class="s">"</span> <span class="a">id=</span><span class="s">"</span><span class="h">&lt;?php</span> <span class="k3">echo</span> <span class="v">$this</span><span class="o">-&gt;</span><span class="m">getHTMLId</span><span class="p">(</span><span class="p">)</span> <span class="h">?&gt;</span><span class="s">"</span><span class="o">&gt;</span></div>
<div class="ln" style="top:463.50px">44</div>
<div class="cl" style="top:463.50px;left:224.70px">    <span class="o">&lt;</span><span class="t">label</span> <span class="a">class=</span><span class="s">"control-label</span><span class="h">&lt;?php</span> <span class="k3">echo</span> <span class="v">$class_label</span><span class="p">;</span> <span class="h">?&gt;</span><span class="s">"</span> <span class="a">for=</span><span class="s">"</span><span class="h">&lt;?php</span> <span class="k3">echo</span> <span class="v">$this</span><span class="o">-&gt;</span><span class="m">getFieldId</span><span class="p">(</span><span class="p">)</span> <span class="h">?&gt;</span><span class="s">"</span><span class="o">&gt;</span><span class="h">&lt;?php</span> <span class="k3">echo</span></div>
<div class="cl" style="top:473.27px;left:229.90px"><span class="v">$this</span><span class="o">-&gt;</span><span class="m">getLabel</span><span class="p">(</span><span class="p">)</span> <span class="h">?&gt;</span><span class="o">&lt;/</span><span class="t">label</span><span class="o">&gt;</span></div>
<div class="ln" style="top:483.05px">45</div>
<div class="cl" style="top:483.05px;left:224.70px">    <span class="h">&lt;?php</span> <span class="k3">echo</span> <span class="v">$field_before</span><span class="p">;</span> <span class="h">?&gt;</span><span class="o">&lt;</span><span class="t">input</span> <span class="a">class=</span><span class="s">"</span><span class="h">&lt;?php</span> <span class="k3">echo</span> <span class="v">$class_control</span> <span class="h">?&gt;</span><span class="s">"</span> <span class="a">type=</span><span class="s">"</span><span class="h">&lt;?php</span> <span class="k3">echo</span> <span class="v">$type</span> <span class="h">?&gt;</span><span class="s">"</span> <span class="a">name=</span><span class="s">"</span><span class="h">&lt;?php</span> <span class="k3">echo</span></div>
<div class="cl" style="top:492.82px;left:229.90px"><span class="v">$this</span><span class="o">-&gt;</span><span class="m">getFieldName</span><span class="p">(</span><span class="p">)</span> <span class="h">?&gt;</span><span class="s">"</span> <span class="a">id=</span><span class="s">"</span><span class="h">&lt;?php</span> <span class="k3">echo</span> <span class="v">$this</span><span class="o">-&gt;</span><span class="m">getFieldId</span><span class="p">(</span><span class="p">)</span> <span class="h">?&gt;</span><span class="s">"</span> <span class="a">value=</span><span class="s">"</span><span class="h">&lt;?php</span> <span class="k3">echo</span> <span class="f u1">htmlspecialchars</span><span class="p">(</span><span class="v">$value</span><span class="p">)</span> <span class="h">?&gt;</span><span class="s">"</span><span class="h">&lt;?php</span> <span class="k3">echo</span></div>
<div class="cl" style="top:502.60px;left:229.90px"><span class="v">$this</span><span class="o">-&gt;</span><span class="m">getAttributeElement</span><span class="p">(</span><span class="s">'placeholder'</span><span class="p">)</span><span class="p">,</span> <span class="v">$this</span><span class="o">-&gt;</span><span class="m">getAttributeElement</span><span class="p">(</span><span class="s">'<span class="u2">autocomplete</span>'</span><span class="p">)</span><span class="p">,</span> <span class="v">$this</span><span class="o">-&gt;</span><span class="m">getAttributeElement</span></div>
<div class="cl" style="top:512.38px;left:229.90px"><span class="p">(</span><span class="s">'pattern'</span><span class="p">)</span><span class="p">,</span> <span class="v">$this</span><span class="o">-&gt;</span><span class="m">getAttributeElement</span><span class="p">(</span><span class="s">'required'</span><span class="p">,</span> <span class="k">true</span><span class="p">)</span><span class="p">,</span> <span class="v">$this</span><span class="o">-&gt;</span><span class="m">getAttributeElement</span><span class="p">(</span><span class="s">'disabled'</span><span class="p">,</span> <span class="k">true</span><span class="p">)</span><span class="p">,</span></div>
<div class="cl" style="top:522.15px;left:229.90px"><span class="v">$this</span><span class="o">-&gt;</span><span class="m">getAttributeElement</span><span class="p">(</span><span class="s">'readonly'</span><span class="p">,</span> <span class="k">true</span><span class="p">)</span> <span class="h">?&gt;</span> <span class="o">/&gt;</span></div>
<div class="ln" style="top:531.93px">46</div>
<div class="cl" style="top:531.93px;left:224.70px">    <span class="h">&lt;?php</span> <span class="k3">echo</span> <span class="v">$notice</span> <span class="h">?&gt;</span><span class="h">&lt;?php</span> <span class="k3">echo</span> <span class="v">$field_after</span><span class="p">;</span> <span class="h">?&gt;</span></div>
<div id="br" style="position:absolute;left:678px;top:44.2px;width:42px;height:17px;background:#2b2b2b;border-radius:2px 0 0 2px;opacity:0.92">
<svg style="display:block" width="42" height="17" viewBox="0 0 42 17">
<g opacity="0.85">
<circle cx="8.8" cy="8.4" r="4.3" fill="#5d9f6e"/>
<path d="M8.8 8.4L5.1 6.2A4.3 4.3 0 0 1 12.5 6.2Z" fill="#c9504a"/>
<path d="M8.8 8.4H13.1A4.3 4.3 0 0 1 12.5 6.2L8.8 8.4L11 12.1A4.3 4.3 0 0 0 13.1 8.4Z" fill="#d9b13e"/>
<path d="M12.5 6.2A4.3 4.3 0 0 1 9.4 12.66L8.8 8.4Z" fill="#d9b13e"/>
<circle cx="8.8" cy="8.4" r="1.9" fill="#d8dde0"/><circle cx="8.8" cy="8.4" r="1.3" fill="#5a86c4"/>
<circle cx="21.2" cy="8.4" r="4.3" fill="#c9622e"/>
<path d="M21.2 4.1A4.3 4.3 0 0 1 21.2 12.7A5 5 0 0 0 23.6 7.2Z" fill="#e0b436"/>
<circle cx="20.6" cy="8.2" r="2.5" fill="#5a4aa0"/><path d="M18.4 9.2Q20.6 7.6 23 9.4" stroke="#d05a7a" stroke-width="1" fill="none"/>
<circle cx="33.2" cy="8.4" r="4.1" fill="#4a86b4" stroke="#b9d4e6" stroke-width="0.9"/>
<path d="M31.4 10.2L32.6 7.8L35 6.6L33.8 9Z" fill="#d5e4ee"/>
<circle cx="45.6" cy="8.4" r="4.3" fill="#c84650"/>
</g></svg></div>
<div style="position:absolute;left:229.3px;top:521.9px;width:7px;height:9.1px">
<svg style="display:block" width="7" height="9.1" viewBox="0 0 10 13"><circle cx="5" cy="4.6" r="4.3" fill="#f4d07c"/><rect x="3" y="8.6" width="4" height="3.4" rx="0.8" fill="#c9c9c9"/></svg></div>
</body></html>
